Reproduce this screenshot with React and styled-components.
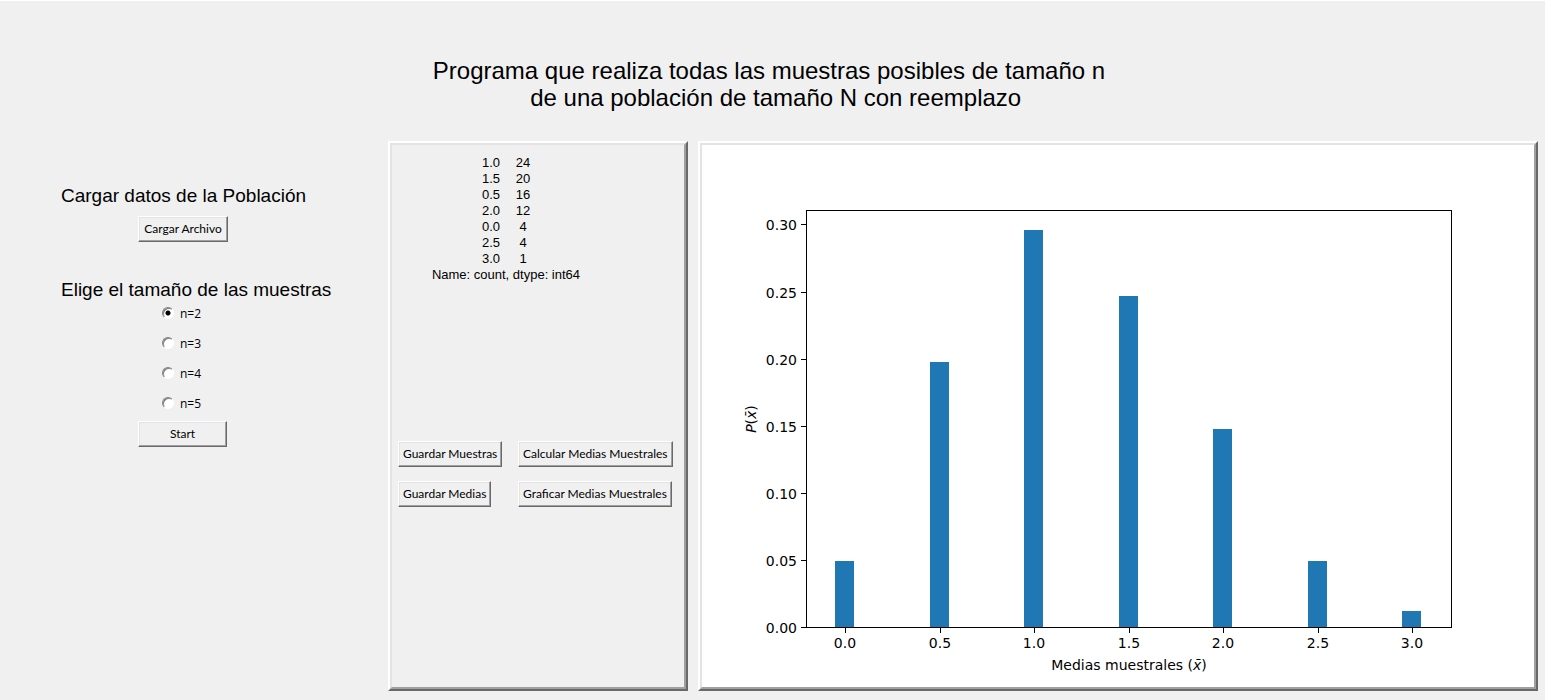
import React, { useState } from "react";
import styled, { createGlobalStyle } from "styled-components";

const GlobalStyle = createGlobalStyle`
  * { box-sizing: border-box; }
  body {
    margin: 0;
    background: #f0f0f0;
    color: #000;
    font-family: "Liberation Sans", Arial, sans-serif;
  }
`;

const Page = styled.div`
  display: flex;
  flex-direction: column;
  min-height: 100vh;
  padding: 56px 7px 9px 0;
  border-top: 1px solid #fff;
`;

const Title = styled.h1`
  margin: 0 0 30px;
  font-size: 24px;
  font-weight: 400;
  line-height: 27px;
  text-align: center;
  white-space: pre-wrap;
`;

const Main = styled.main`
  flex: 1;
  display: grid;
  grid-template-columns: 378px 300px minmax(0, 1fr);
  gap: 10px;
`;

const Controls = styled.form`
  display: flex;
  flex-direction: column;
  align-items: flex-start;
  padding: 45px 0 0 61px;
`;

const SectionTitle = styled.h2`
  margin: 0 0 10px;
  font-size: 19px;
  font-weight: 400;
  line-height: 20px;
  white-space: nowrap;
`;

const Button = styled.button`
  height: 26px;
  min-width: ${(p) => p.$minWidth || "0"};
  margin: 0;
  padding: 0 4px 1px;
  border: 1px solid;
  border-color: #fff #696969 #696969 #fff;
  border-radius: 0;
  box-shadow: inset -1px -1px 0 #a0a0a0, inset 1px 1px 0 #e3e3e3;
  background: #f0f0f0;
  color: #000;
  font-family: Lato, "Segoe UI", sans-serif;
  font-size: 12px;
  line-height: 16px;
  white-space: nowrap;
`;

const ControlSlot = styled.div`
  padding-left: 77px;
`;

const SizeGroup = styled.fieldset`
  margin: 38px 0 2px;
  padding: 0;
  border: 0;
`;

const SizeLegend = styled.legend`
  padding: 0;
  font-size: 19px;
  line-height: 19px;
  white-space: nowrap;
`;

const SizeOption = styled.label`
  display: flex;
  align-items: center;
  gap: 6px;
  height: 30px;
  padding-left: 101px;
  font-family: "Open Sans", "Segoe UI", sans-serif;
  font-size: 12px;
  line-height: 16px;
`;

const Radio = styled.input`
  appearance: none;
  width: 12px;
  height: 12px;
  margin: 0 0 2px;
  border: 1px solid;
  border-color: #808080 #fff #fff #808080;
  border-radius: 50%;
  background: #fff;
  box-shadow: inset 1px 1px 0 #808080;

  &:checked {
    background: radial-gradient(circle, #000 0 2px, #fff 3px);
  }
`;

const Panel = styled.section`
  border: 2px solid;
  border-color: #fff #696969 #696969 #fff;
  background: ${(p) => p.$background || "#f0f0f0"};
  display: flex;
  flex-direction: column;
`;

const PanelInner = styled.div`
  flex: 1;
  border: 2px solid;
  border-color: #e3e3e3 #a0a0a0 #a0a0a0 #e3e3e3;
  padding: ${(p) => p.$padding || "0"};
`;

const Counts = styled.table`
  width: 150px;
  margin: 0 0 158px 33px;
  border-collapse: collapse;
  table-layout: fixed;
  font-size: 13px;
  line-height: 16px;
`;

const CountsCaption = styled.caption`
  caption-side: bottom;
  white-space: nowrap;
`;

const MeanCell = styled.th`
  padding: 0 6px 0 0;
  font-weight: 400;
  text-align: right;
`;

const CountCell = styled.td`
  padding: 0 49px 0 8px;
  text-align: center;
`;

const Actions = styled.div`
  display: grid;
  grid-template-columns: 120px auto;
  row-gap: 14px;
  justify-content: start;
  justify-items: start;
`;

const ChartSvg = styled.svg`
  display: block;
  width: 100%;
  height: auto;
  font-family: "DejaVu Sans", sans-serif;
  font-size: 14px;
`;

const counts = [
  ["1.0", 24],
  ["1.5", 20],
  ["0.5", 16],
  ["2.0", 12],
  ["0.0", 4],
  ["2.5", 4],
  ["3.0", 1],
];

const total = counts.reduce((sum, [, n]) => sum + n, 0);
const plot = { left: 104, right: 749, top: 65, bottom: 482 };
const xAt = (mean) => Math.round(143 + mean * 189);
const yExact = (p) => plot.bottom - p * 1342;
const yAt = (p) => Math.round(yExact(p));
const yTicks = [0, 0.05, 0.1, 0.15, 0.2, 0.25, 0.3];
const xTicks = [0, 0.5, 1, 1.5, 2, 2.5, 3];

function Chart() {
  return (
    <ChartSvg viewBox="0 0 832 542" role="img" aria-label="Medias muestrales">
      {counts.map(([mean, n]) => {
        const top = Math.ceil(yExact(n / total));
        return (
          <rect
            key={mean}
            x={xAt(Number(mean)) - 10}
            y={top}
            width="19"
            height={plot.bottom - top}
            fill="#1f77b4"
          />
        );
      })}
      <rect
        x={plot.left + 0.5}
        y={plot.top + 0.5}
        width={plot.right - plot.left}
        height={plot.bottom - plot.top}
        fill="none"
        stroke="#000"
      />
      {yTicks.map((p) => (
        <g key={p}>
          <path d={`M${plot.left - 5} ${yAt(p) + 0.5}h5`} stroke="#000" />
          <text x={plot.left - 9} y={yAt(p) + 6} textAnchor="end">
            {p.toFixed(2)}
          </text>
        </g>
      ))}
      {xTicks.map((m) => (
        <g key={m}>
          <path d={`M${xAt(m) + 0.5} ${plot.bottom + 1}v5`} stroke="#000" />
          <text x={xAt(m)} y={plot.bottom + 21} textAnchor="middle">
            {m.toFixed(1)}
          </text>
        </g>
      ))}
      <text x="427" y="525" textAnchor="middle">
        Medias muestrales (<tspan fontStyle="italic">x̄</tspan>)
      </text>
      <text transform="translate(54 274) rotate(-90)" textAnchor="middle">
        <tspan fontStyle="italic">P</tspan>(<tspan fontStyle="italic">x̄</tspan>)
      </text>
    </ChartSvg>
  );
}

export default function App() {
  const [size, setSize] = useState(2);
  return (
    <>
      <GlobalStyle />
      <Page>
        <Title>
          {"Programa que realiza todas las muestras posibles de tamaño n\n\u00a0\u00a0de una población de tamaño N con reemplazo"}
        </Title>
        <Main>
          <Controls onSubmit={(e) => e.preventDefault()}>
            <SectionTitle>Cargar datos de la Población</SectionTitle>
            <ControlSlot>
              <Button type="button" $minWidth="90px">Cargar Archivo</Button>
            </ControlSlot>
            <SizeGroup>
              <SizeLegend>Elige el tamaño de las muestras</SizeLegend>
              {[2, 3, 4, 5].map((n) => (
                <SizeOption key={n}>
                  <Radio
                    type="radio"
                    name="size"
                    value={n}
                    checked={size === n}
                    onChange={() => setSize(n)}
                  />
                  n={n}
                </SizeOption>
              ))}
            </SizeGroup>
            <ControlSlot>
              <Button type="submit" $minWidth="89px">Start</Button>
            </ControlSlot>
          </Controls>
          <Panel>
            <PanelInner $padding="10px 6px">
              <Counts>
                <CountsCaption>Name: count, dtype: int64</CountsCaption>
                <tbody>
                  {counts.map(([mean, n]) => (
                    <tr key={mean}>
                      <MeanCell scope="row">{mean}</MeanCell>
                      <CountCell>{n}</CountCell>
                    </tr>
                  ))}
                </tbody>
              </Counts>
              <Actions>
                <Button type="button">Guardar Muestras</Button>
                <Button type="button">Calcular Medias Muestrales</Button>
                <Button type="button">Guardar Medias</Button>
                <Button type="button">Graficar Medias Muestrales</Button>
              </Actions>
            </PanelInner>
          </Panel>
          <Panel $background="#fff">
            <PanelInner>
              <Chart />
            </PanelInner>
          </Panel>
        </Main>
      </Page>
    </>
  );
}
